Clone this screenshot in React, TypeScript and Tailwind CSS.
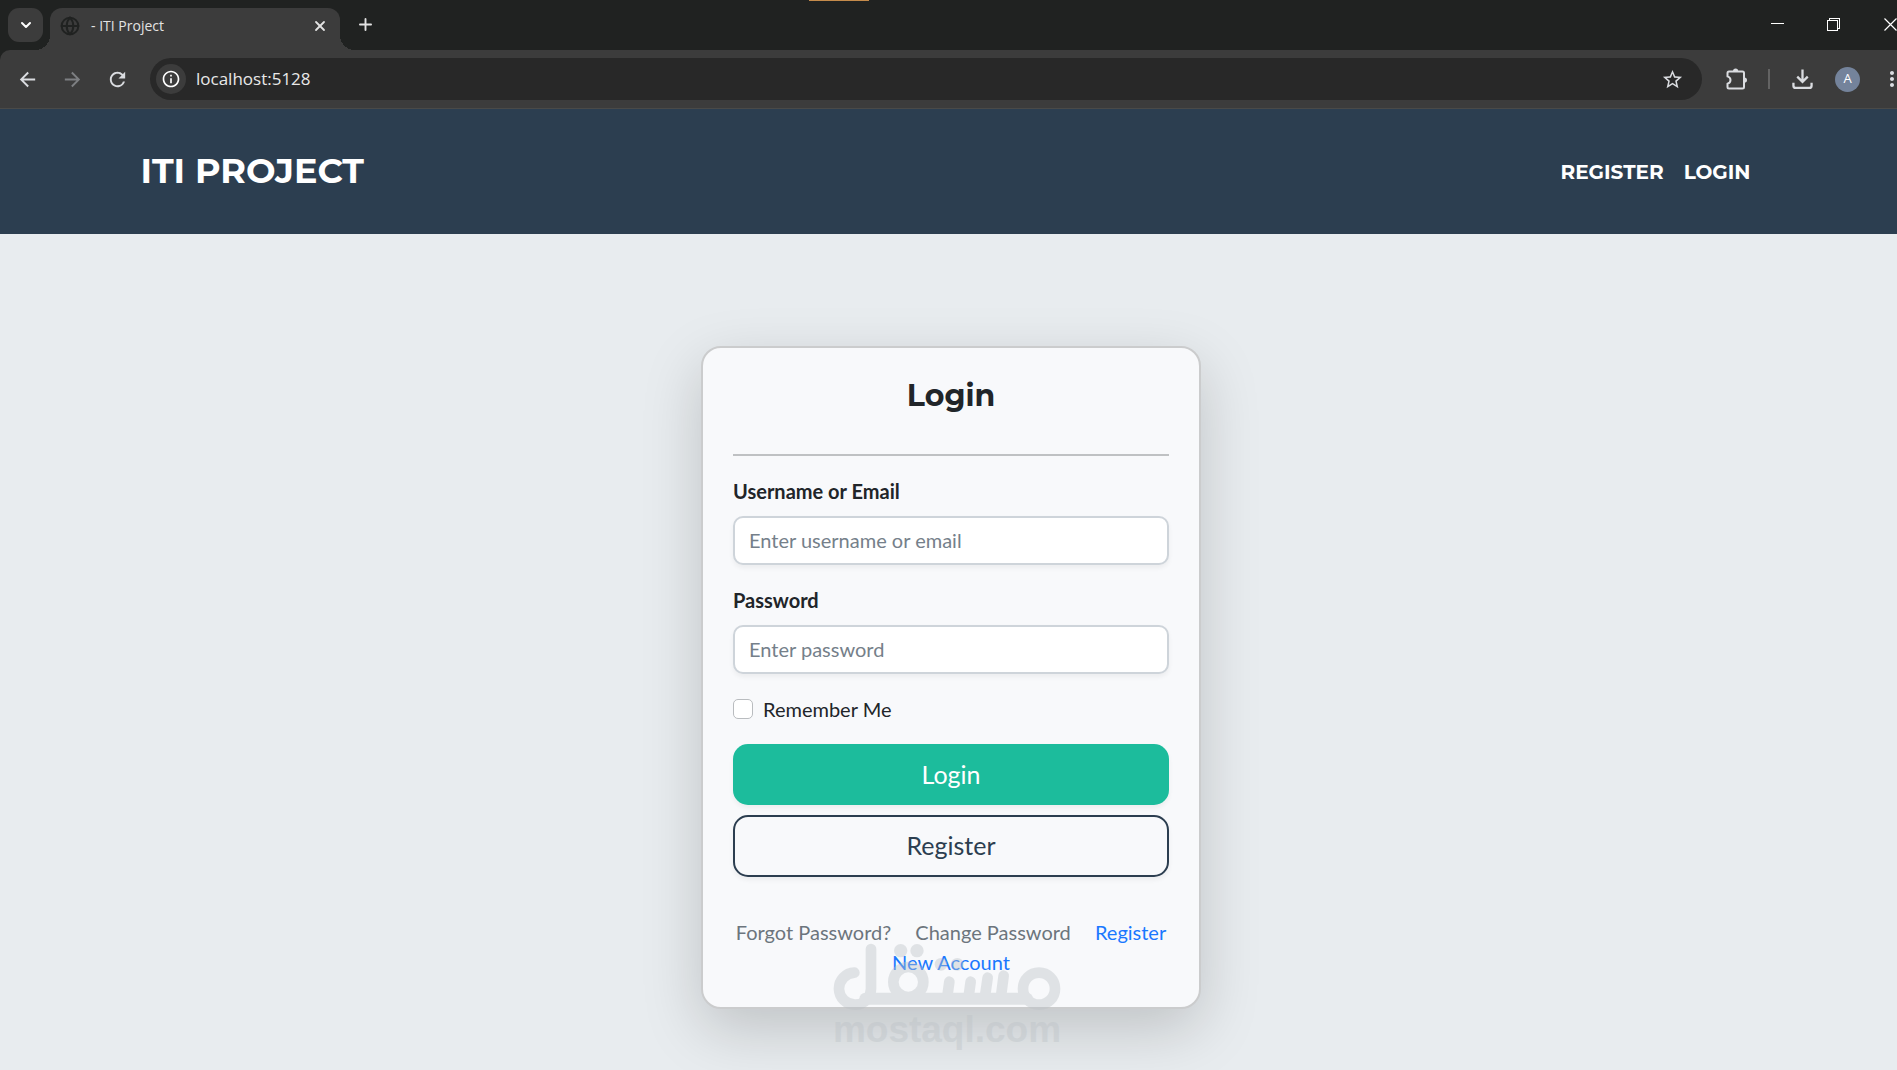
import { useState } from 'react';
import { ChevronDown, Globe, Plus, X } from 'lucide-react';
import {
  MdArrowBack,
  MdArrowForward,
  MdMoreVert,
  MdOutlineInfo,
  MdRefresh,
  MdStarOutline,
} from 'react-icons/md';

function TabStrip() {
  return (
    <div className="relative flex h-[50px] items-end bg-[#202221] pl-2">
      <div className="absolute top-0 left-[809px] h-px w-[60px] bg-[#c58b4b]" />
      <button
        aria-label="Search tabs"
        className="mb-2 flex h-[34px] w-[35px] items-center justify-center rounded-[11px] bg-[#3c3c3c] text-white"
      >
        <ChevronDown className="h-4 w-4" strokeWidth={3} />
      </button>
      <div className="relative ml-[7px] flex h-[42px] w-[290px] items-center rounded-t-xl bg-[#3c3c3c] px-[10px] pb-[7px] before:absolute before:bottom-0 before:-left-[15px] before:h-[15px] before:w-[15px] before:bg-[radial-gradient(circle_at_0_0,transparent_15px,#3c3c3c_15px)] after:absolute after:-right-[15px] after:bottom-0 after:h-[15px] after:w-[15px] after:bg-[radial-gradient(circle_at_100%_0,transparent_15px,#3c3c3c_15px)]">
        <Globe className="h-5 w-5 text-[#202221]" strokeWidth={2.4} />
        <span className="ml-[11px] flex-1 text-[14px] leading-5 text-[#e3e3e3]">- ITI Project</span>
        <button aria-label="Close tab" className="mr-[2px] text-[#e3e3e3]">
          <X className="h-4 w-4" strokeWidth={2.7} />
        </button>
      </div>
      <button aria-label="New tab" className="mb-4 ml-4 text-[#e3e3e3]">
        <Plus className="h-[19px] w-[19px]" strokeWidth={2.4} />
      </button>
      <div className="flex flex-1 items-center justify-end gap-[43px] self-stretch overflow-hidden pb-[2px] text-white">
        <button aria-label="Minimize">
          <svg width="13" height="13" viewBox="0 0 13 13" shapeRendering="crispEdges">
            <path d="M0 5.5H13" stroke="currentColor" />
          </svg>
        </button>
        <button aria-label="Restore">
          <svg width="13" height="13" viewBox="0 0 13 13" fill="none" stroke="currentColor" shapeRendering="crispEdges">
            <path d="M0.5 2.5H10.5V12.5H0.5ZM2.5 2.5V0.5H12.5V10.5H10.5" />
          </svg>
        </button>
        <button aria-label="Close" className="-mr-px">
          <svg width="15" height="13" viewBox="0 0 15 13" fill="none" stroke="currentColor" strokeWidth="1.2">
            <path d="M1.5 0.5L13.5 12.5M13.5 0.5L1.5 12.5" />
          </svg>
        </button>
      </div>
    </div>
  );
}

function Toolbar() {
  return (
    <div className="bg-[#202221]">
      <div className="flex h-[59px] items-center rounded-tl-[10px] border-b border-[#4a4a48] bg-[#3c3c3c] pl-4 text-[#dadce0]">
        <button aria-label="Back">
          <MdArrowBack className="h-[23px] w-[23px]" />
        </button>
        <button aria-label="Forward" disabled className="ml-[22px] text-[#7d7f82]">
          <MdArrowForward className="h-[23px] w-[23px]" />
        </button>
        <button aria-label="Reload" className="ml-[22px]">
          <MdRefresh className="h-[23px] w-[23px]" />
        </button>
        <div className="ml-[21px] flex h-[42px] flex-1 items-center rounded-full bg-[#282828] pr-[18px] pl-[6px]">
          <button
            aria-label="View site information"
            className="flex h-[30px] w-[30px] items-center justify-center rounded-full bg-[#3c3c3c] text-white"
          >
            <MdOutlineInfo className="h-5 w-5" />
          </button>
          <input
            aria-label="Address"
            defaultValue="localhost:5128"
            className="ml-[10px] min-w-0 flex-1 bg-transparent text-[17px] leading-6 text-[#e8e8e8] outline-none"
          />
          <button aria-label="Bookmark this tab">
            <MdStarOutline className="h-[23px] w-[23px]" />
          </button>
        </div>
        <button aria-label="Extensions" className="ml-[22px]">
          <svg width="24" height="24" viewBox="0 0 24 24" fill="none" stroke="currentColor" strokeWidth="2">
            <path
              d="M5 4.5H18.5Q20 4.5 20 6V20Q20 21.5 18.5 21.5H5Q3.5 21.5 3.5 20V16.6Q6.5 15.8 6.5 13Q6.5 10.2 3.5 9.4V6Q3.5 4.5 5 4.5Z"
              strokeLinejoin="round"
            />
            <path d="M9 4.2A2.6 2.6 0 0 1 14.2 4.2ZM20.4 10.4A2.6 2.6 0 0 1 20.4 15.6Z" fill="currentColor" stroke="none" />
          </svg>
        </button>
        <div className="ml-5 h-5 w-[2px] bg-[#636363]" />
        <button aria-label="Downloads" className="ml-[22px]">
          <svg width="21" height="22" viewBox="0 0 22 22" fill="none" stroke="currentColor" strokeWidth="2.4">
            <path d="M11 1V13.5M5.5 8.5L11 14L16.5 8.5M1.5 15V18Q1.5 20.3 3.8 20.3H18.2Q20.5 20.3 20.5 18V15" />
          </svg>
        </button>
        <button
          aria-label="Profile"
          className="ml-[22px] flex h-[25px] w-[25px] items-center justify-center rounded-full bg-[#74839b] text-[13px] text-white"
        >
          A
        </button>
        <button aria-label="Menu" className="-mr-[7px] ml-5">
          <MdMoreVert className="h-6 w-6" />
        </button>
      </div>
    </div>
  );
}

function SiteHeader() {
  return (
    <header className="bg-[#2c3e50] font-['Montserrat','Inter',sans-serif] font-bold text-white">
      <nav className="mx-auto flex h-[125px] w-full max-w-[1616px] items-center justify-between pb-[2px]">
        <a href="#home" className="text-[35px] leading-[50px]">
          ITI PROJECT
        </a>
        <div className="flex gap-5 pt-[2px] pr-[6px] text-[20px] leading-[30px]">
          <a href="#register">REGISTER</a>
          <a href="#login">LOGIN</a>
        </div>
      </nav>
    </header>
  );
}

interface FieldProps {
  id: string;
  label: string;
  type: string;
  placeholder: string;
}

function Field({ id, label, type, placeholder }: FieldProps) {
  return (
    <div className="mb-5">
      <label htmlFor={id} className="mb-[10px] block font-bold">
        {label}
      </label>
      <input
        id={id}
        type={type}
        placeholder={placeholder}
        className="block h-[49px] w-full rounded-[10px] border-2 border-[#ced4da] bg-white px-[14px] pb-[2px] shadow-[0_3px_5px_rgba(0,0,0,0.05)] outline-none placeholder:text-[#75808a]"
      />
    </div>
  );
}

function LoginCard() {
  const [remember, setRemember] = useState(false);

  return (
    <form
      onSubmit={(e) => e.preventDefault()}
      className="w-[500px] max-w-full rounded-[20px] border-2 border-[#cbcccd] bg-[#f8f9fb] p-[30px] text-[20px] leading-[30px] text-[#212529] shadow-[0_20px_60px_rgba(0,0,0,0.175)]"
    >
      <h1 className="text-center font-['Montserrat','Inter',sans-serif] text-[30px] leading-9 font-bold">
        Login
      </h1>
      <hr className="mt-10 mb-5 border-t-2 border-[#bfc1c3]" />

      <Field id="username" label="Username or Email" type="text" placeholder="Enter username or email" />
      <Field id="password" label="Password" type="password" placeholder="Enter password" />

      <div className="mb-5 flex items-center gap-[10px]">
        <input
          id="remember"
          type="checkbox"
          checked={remember}
          onChange={(e) => setRemember(e.target.checked)}
          className="h-5 w-5 appearance-none rounded-[5px] border border-[#b9bcbf] bg-white checked:bg-[#1abc9c]"
        />
        <label htmlFor="remember">Remember Me</label>
      </div>

      <div className="flex flex-col gap-[10px] text-[25px] leading-[38px]">
        <button
          type="submit"
          className="h-[61px] rounded-[15px] bg-[#1cbc9c] pb-[2px] text-white shadow-[0_3px_5px_rgba(0,0,0,0.05)]"
        >
          Login
        </button>
        <button
          type="button"
          className="h-[62px] rounded-[15px] border-2 border-[#2c3e50] pb-[2px] text-[#2c3e50] shadow-[0_3px_5px_rgba(0,0,0,0.05)]"
        >
          Register
        </button>
      </div>

      <div className="mt-10 text-center text-[#6c757d]">
        <a href="#forgot" className="mr-[19px]">
          Forgot Password?
        </a>{' '}
        <a href="#change" className="mr-[19px]">
          Change Password
        </a>{' '}
        <a href="#register" className="text-[#1a78ff]">
          Register New Account
        </a>
      </div>
    </form>
  );
}

function Watermark() {
  return (
    <div className="pointer-events-none absolute inset-x-0 bottom-5 flex flex-col items-center pr-[3px] text-[#bcc2c6] opacity-40">
      <svg width="230" height="67" viewBox="430 190 690 201" fill="none" stroke="currentColor" strokeWidth="32" strokeLinecap="round">
        <path d="M497 279A48 48 0 1 0 547 327V208" />
        <path d="M530 357H1015" strokeWidth="36" />
        <circle cx="659" cy="307" r="45" />
        <circle cx="1051" cy="327" r="48" />
        <path d="M782 306L776 350M846 306L840 350M897 294L889 350M945 288L937 350" />
        <g fill="currentColor" stroke="none">
          <circle cx="636" cy="213" r="20" />
          <circle cx="685" cy="213" r="20" />
          <circle cx="757" cy="254" r="19" />
          <circle cx="806" cy="254" r="19" />
        </g>
      </svg>
      <span className="font-['Liberation_Sans',Arial,sans-serif] text-[37px] leading-10 font-bold">
        mostaql.com
      </span>
    </div>
  );
}

export default function App() {
  return (
    <div className="relative flex min-h-screen flex-col overflow-x-hidden bg-[#e8ecef]">
      <div className="font-['Segoe_UI','Open_Sans',sans-serif]">
        <TabStrip />
        <Toolbar />
      </div>
      <SiteHeader />
      <main className="flex flex-1 justify-center pt-28 pb-10 pl-[5px] font-['Lato',sans-serif]">
        <div>
          <LoginCard />
        </div>
      </main>
      <Watermark />
    </div>
  );
}
